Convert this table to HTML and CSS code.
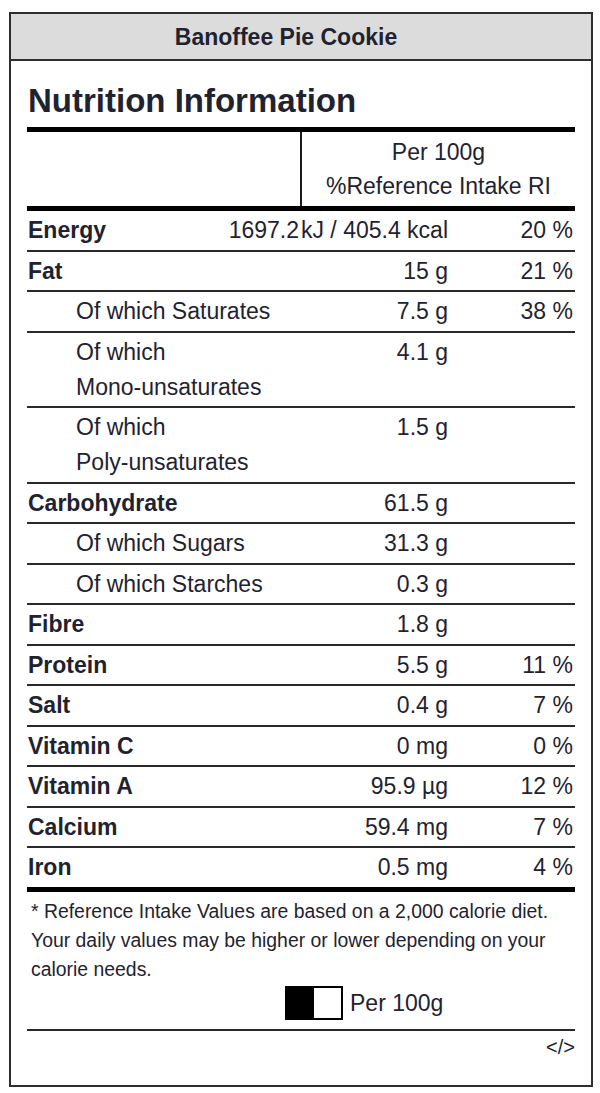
FILE: index.html
```html
<!DOCTYPE html>
<html lang="en">
<head>
<meta charset="utf-8">
<title>Banoffee Pie Cookie - Nutrition Information</title>
<link rel="stylesheet" href="styles.css">
</head>
<body>
<div class="card">
  <div class="card-head">Banoffee Pie Cookie</div>
  <div class="card-body">
    <h1 class="title">Nutrition Information</h1>
    <div class="thick"></div>
    <div class="head-row">
      <div class="head-blank"></div>
      <div class="head-cell">Per 100g<br>%Reference Intake RI</div>
    </div>
    <div class="thick"></div>

    <div class="row"><div class="name bold">Energy</div><div class="val">1697.2&#8202;kJ / 405.4 kcal</div><div class="pct">20 %</div></div>
    <div class="row"><div class="name bold">Fat</div><div class="val">15 g</div><div class="pct">21 %</div></div>
    <div class="row"><div class="name sub">Of which Saturates</div><div class="val">7.5 g</div><div class="pct">38 %</div></div>
    <div class="row"><div class="name sub">Of which <span class="nw">Mono-unsaturates</span></div><div class="val">4.1 g</div><div class="pct"></div></div>
    <div class="row"><div class="name sub">Of which <span class="nw">Poly-unsaturates</span></div><div class="val">1.5 g</div><div class="pct"></div></div>
    <div class="row"><div class="name bold">Carbohydrate</div><div class="val">61.5 g</div><div class="pct"></div></div>
    <div class="row"><div class="name sub">Of which Sugars</div><div class="val">31.3 g</div><div class="pct"></div></div>
    <div class="row"><div class="name sub">Of which Starches</div><div class="val">0.3 g</div><div class="pct"></div></div>
    <div class="row"><div class="name bold">Fibre</div><div class="val">1.8 g</div><div class="pct"></div></div>
    <div class="row"><div class="name bold">Protein</div><div class="val">5.5 g</div><div class="pct">11 %</div></div>
    <div class="row"><div class="name bold">Salt</div><div class="val">0.4 g</div><div class="pct">7 %</div></div>
    <div class="row"><div class="name bold">Vitamin C</div><div class="val">0 mg</div><div class="pct">0 %</div></div>
    <div class="row"><div class="name bold">Vitamin A</div><div class="val">95.9 µg</div><div class="pct">12 %</div></div>
    <div class="row"><div class="name bold">Calcium</div><div class="val">59.4 mg</div><div class="pct">7 %</div></div>
    <div class="row last"><div class="name bold">Iron</div><div class="val">0.5 mg</div><div class="pct">4 %</div></div>
    <div class="thick"></div>

    <p class="note">* Reference Intake Values are based on a 2,000 calorie diet. Your daily values may be higher or lower depending on your calorie needs.</p>

    <div class="toggle-row">
      <span class="toggle"><span class="toggle-on"></span><span class="toggle-off"></span></span>
      <span class="toggle-label">Per 100g</span>
    </div>
    <div class="rule"></div>
    <div class="embed">&lt;/&gt;</div>
  </div>
</div>
</body>
</html>
```

FILE: styles.css
```css
* { box-sizing: border-box; }

html, body {
  margin: 0;
  padding: 0;
  background: #ffffff;
}

body {
  font-family: "Liberation Sans", Arial, sans-serif;
  color: #1f2330;
  padding: 12px 7px 0 9px;
}

.card {
  width: 584px;
  height: 1075px;
  border: 2px solid #2e2e2e;
  background: #ffffff;
}

.card-head {
  height: 47px;
  background: #dcdcdc;
  border-bottom: 2px solid #2e2e2e;
  font-size: 23px;
  font-weight: bold;
  line-height: 46px;
  text-align: center;
  padding-right: 30px;
}

.card-body {
  padding: 0 16px 0 16px;
}

.title {
  margin: 0;
  padding-top: 20px;
  font-size: 33px;
  font-weight: bold;
  line-height: 40px;
  height: 66px;
  padding-left: 1px;
}

.thick {
  height: 5px;
  background: #000000;
}

.head-row {
  display: flex;
  height: 74px;
}

.head-blank {
  width: 275px;
  border-right: 2px solid #1a1a1a;
}

.head-cell {
  flex: 1;
  text-align: center;
  font-size: 23px;
  line-height: 34px;
  padding-top: 3px;
}

.row {
  display: flex;
  align-items: flex-start;
  font-size: 23px;
  line-height: 35px;
  padding: 2px 2px 1.5px 1px;
  border-bottom: 2px solid #2a2a2a;
}

.row.last {
  border-bottom: none;
}

.name {
  flex: 1;
  min-width: 0;
}

.name.bold {
  font-weight: bold;
}

.name.sub {
  padding-left: 48px;
  padding-right: 20px;
}

.nw {
  white-space: nowrap;
}

.val {
  flex: none;
  min-width: 150px;
  text-align: right;
  white-space: nowrap;
}

.pct {
  flex: none;
  width: 125px;
  text-align: right;
  white-space: nowrap;
}

.note {
  margin: 0;
  padding: 5px 0 0 4px;
  font-size: 19.4px;
  line-height: 29px;
}

.toggle-row {
  display: flex;
  align-items: center;
  gap: 7px;
  padding-left: 258px;
  margin-top: 2px;
  height: 34px;
}

.toggle {
  display: flex;
  width: 58px;
  height: 34px;
  border: 2px solid #000000;
  background: #ffffff;
}

.toggle-on {
  width: 27px;
  background: #000000;
}

.toggle-off {
  flex: 1;
}

.toggle-label {
  font-size: 23px;
  line-height: 34px;
}

.rule {
  margin-top: 9px;
  height: 2px;
  background: #2a2a2a;
}

.embed {
  text-align: right;
  font-size: 20px;
  line-height: 30px;
  padding-top: 1px;
}
```
